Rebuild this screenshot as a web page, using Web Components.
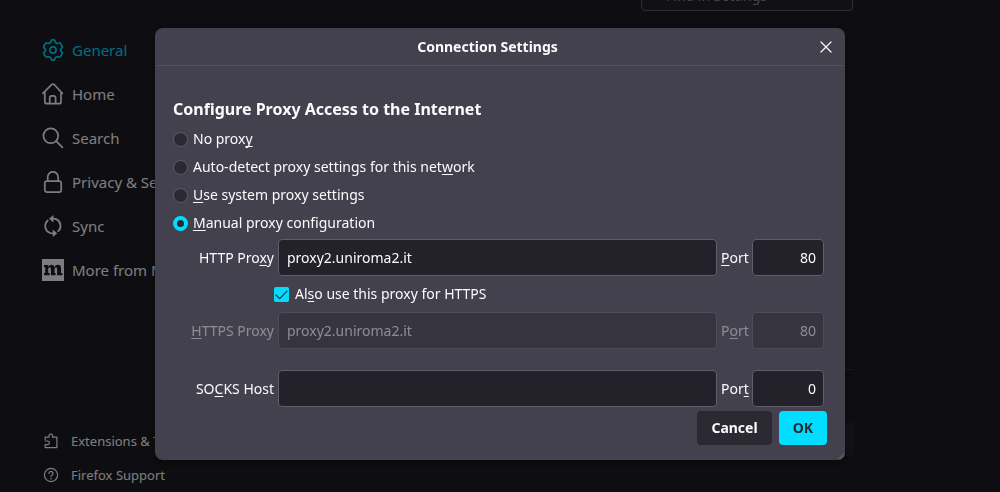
<!DOCTYPE html>
<html lang="en">
<head>
<meta charset="utf-8">
<meta name="viewport" content="width=device-width, initial-scale=1">
<title>Settings</title>
<style>
  :root {
    --bg: #1c1b22;
    --text: #fbfbfe;
    --accent: #00ddff;
    --dialog-bg: #42414d;
    --field-bg: #23222b;
    --button-bg: #2b2a33;
    --border: #5f5e69;
  }
  body {
    margin: 0;
    height: 100vh;
    overflow: hidden;
    background: var(--bg);
    color: var(--text);
    font: 14px/20px "Noto Sans", sans-serif;
  }
</style>
</head>
<body>
<settings-page>
  <nav-item slot="nav" icon="gear" href="#general" selected>General</nav-item>
  <nav-item slot="nav" icon="home" href="#home">Home</nav-item>
  <nav-item slot="nav" icon="search" href="#search">Search</nav-item>
  <nav-item slot="nav" icon="lock" href="#privacy">Privacy &amp; Se</nav-item>
  <nav-item slot="nav" icon="sync" href="#sync">Sync</nav-item>
  <nav-item slot="nav" icon="mozilla" href="#more">More from M</nav-item>
  <nav-item slot="footer" icon="extension" href="#addons" small>Extensions &amp; T</nav-item>
  <nav-item slot="footer" icon="help" href="#support" small>Firefox Support</nav-item>
</settings-page>

<settings-dialog>
  <span slot="title">Connection Settings</span>
  <proxy-form></proxy-form>
  <dialog-button slot="actions">Cancel</dialog-button>
  <dialog-button slot="actions" primary>OK</dialog-button>
</settings-dialog>

<script>
const icons = {
  gear: `<path d="M8.7 3.4 9.3 1.5Q9.6 .8 10.4 .8H11.6Q12.4 .8 12.7 1.5L13.3 3.4Q14.3 3.8 15.1 4.4L17.3 4Q18.1 3.8 18.6 4.6L20.2 7.3Q20.6 8.1 20 8.7L18.5 10.3Q18.6 11 18.5 11.7L20 13.3Q20.6 13.9 20.2 14.7L18.6 17.4Q18.1 18.2 17.3 18L15.1 17.6Q14.3 18.2 13.3 18.6L12.7 20.5Q12.4 21.2 11.6 21.2H10.4Q9.6 21.2 9.3 20.5L8.7 18.6Q7.7 18.2 6.9 17.6L4.7 18Q3.9 18.2 3.4 17.4L1.8 14.7Q1.4 13.9 2 13.3L3.5 11.7Q3.4 11 3.5 10.3L2 8.7Q1.4 8.1 1.8 7.3L3.4 4.6Q3.9 3.8 4.7 4L6.9 4.4Q7.7 3.8 8.7 3.4Z"/><circle cx="11" cy="11" r="3.1"/>`,
  home: `<path d="M.9 10.4 9.6 1.7Q11 .5 12.4 1.7L20.3 10.4M2.8 8.8V18.7Q2.8 20.7 4.8 20.7H17Q19 20.7 19 18.7V8.8M7.7 20.5V14.9Q7.7 12.9 9.7 12.9H11.6Q13.6 12.9 13.6 14.9V20.5"/>`,
  search: `<circle cx="8.8" cy="8.8" r="7.4"/><path d="m14.2 14.2 6.2 6.2"/>`,
  lock: `<rect x="2.8" y="10.1" width="16.4" height="11" rx="2"/><path d="M5.7 10V6a5.2 5.2 0 0 1 10.4 0V10"/>`,
  sync: `<path d="M7.5 17.8A7.4 7.4 0 0 1 5.8 5.5M10.5 3.6H11A7.4 7.4 0 0 1 16.2 16.2M14.5 4.2A7.4 7.4 0 0 1 16.2 16.2M7.5 17.8A7.4 7.4 0 0 0 11.5 18.4"/><path class="fill" d="M11.4 0V7.4L7 3.7ZM10.8 14.6V22L15.2 18.3Z"/>`,
  mozilla: `<path class="fill" d="M0 0H22V22H0Z"/><path class="cut" d="M2 6H6.4V8Q7.4 5.8 9.6 5.8T12.4 8Q13.6 5.8 15.9 5.8 19 5.8 19 9.2V14H20.4V16.2H15.1V10Q15.1 8.2 14 8.2 12.6 8.2 12.6 10.4V14H13.6V16.2H8.9V10Q8.9 8.2 7.8 8.2 6.2 8.2 6.2 10.4V14H7.6V16.2H2V14H3.2V8.2H2Z"/>`,
  extension: `<path d="M2.2 6.6V4.2H6V2.9A1.8 1.8 0 0 1 9.6 2.9V4.2H13.9V14.6H2.2V11.6H4.6A1.8 1.8 0 0 0 4.6 8H2.2"/>`,
  help: `<circle cx="8" cy="8" r="6.6"/><path d="M6 6.5A2 2 0 1 1 9.3 8Q8 8.8 8 9.6"/><circle class="fill" cx="8" cy="11.7" r=".8"/>`,
};

function setUp(element, html) {
  const template = document.createElement("template");
  template.innerHTML = html;
  element.attachShadow({ mode: "open" });
  element.shadowRoot.appendChild(template.content.cloneNode(true));
}

class NavItem extends HTMLElement {
  constructor() {
    super();
    const size = this.hasAttribute("small") ? 16 : 22;
    setUp(this, `
      <style>
        :host { display: block; white-space: nowrap; }
        a {
          display: flex;
          align-items: center;
          gap: 8px;
          height: 44px;
          color: var(--text);
          font-size: 15px;
          text-decoration: none;
        }
        :host([selected]) a { color: var(--accent); }
        :host([small]) a { height: 34px; gap: 12px; padding-left: 1px; font-size: 13px; }
        svg {
          flex: none;
          fill: none;
          stroke: currentColor;
          stroke-width: 1.7;
          stroke-linecap: round;
          stroke-linejoin: round;
        }
        :host([small]) svg { stroke-width: 1.2; }
        .fill { fill: currentColor; stroke: none; }
        .cut { fill: var(--bg); stroke: none; }
      </style>
      <a href="${this.getAttribute("href")}">
        <svg width="${size}" height="${size}" viewBox="0 0 ${size} ${size}" aria-hidden="true">${icons[this.getAttribute("icon")]}</svg>
        <slot></slot>
      </a>
    `);
  }
}

class SettingsPage extends HTMLElement {
  constructor() {
    super();
    setUp(this, `
      <style>
        :host { display: flex; height: 100%; }
        nav {
          display: flex;
          flex-direction: column;
          justify-content: space-between;
          box-sizing: border-box;
          width: 240px;
          padding: 28px 0 0 42px;
        }
        main {
          display: flex;
          flex: 1;
          flex-direction: column;
          align-items: flex-end;
          padding-right: 147px;
        }
        /* scrolled partly out of view */
        input {
          box-sizing: border-box;
          width: 212px;
          height: 32px;
          margin-top: -21px;
          padding: 0 24px;
          border: 1px solid #5a5962;
          border-radius: 4px;
          background: #23222b;
          color: var(--text);
          font: inherit;
        }
        input::placeholder { color: #8c8b94; opacity: 1; }
        hr {
          width: 100%;
          margin: 358px 0 52px;
          border: 0;
          border-top: 1px solid #34333b;
        }
        button {
          width: 120px;
          height: 34px;
          border: 0;
          border-radius: 4px;
          background: #25242c;
        }
      </style>
      <nav aria-label="Settings">
        <div><slot name="nav"></slot></div>
        <div><slot name="footer"></slot></div>
      </nav>
      <main>
        <input type="search" placeholder="Find in Settings" aria-label="Find in Settings">
        <hr>
        <button type="button" aria-label="Network settings"></button>
      </main>
    `);
  }
}

class SettingsDialog extends HTMLElement {
  constructor() {
    super();
    setUp(this, `
      <style>
        :host {
          position: fixed;
          inset: 0;
          display: flex;
          align-items: flex-start;
          justify-content: center;
          padding: 28px 16px;
          background: rgba(0, 0, 0, 0.5);
        }
        section {
          position: relative;
          box-sizing: border-box;
          width: 100%;
          max-width: 690px;
          border-radius: 8px;
          background: var(--dialog-bg);
          box-shadow: 0 2px 6px rgba(0, 0, 0, 0.4);
        }
        header {
          display: grid;
          grid-template-columns: 1fr 24px;
          align-items: center;
          height: 37px;
          padding: 0 7px 0 6px;
          border-bottom: 1px solid #52515e;
        }
        h1 {
          margin: 0;
          font-size: 14px;
          text-align: center;
        }
        header button {
          display: grid;
          place-items: center;
          height: 24px;
          padding: 0;
          border: 0;
          background: none;
          color: var(--text);
        }
        .body { padding: 31px 18px 0; }
        footer {
          display: flex;
          justify-content: flex-end;
          gap: 7px;
          padding: 4px 18px 15px;
        }
        .grip { position: absolute; right: 0; bottom: 0; }
      </style>
      <section role="dialog" aria-labelledby="title">
        <header>
          <h1 id="title"><slot name="title"></slot></h1>
          <button type="button" aria-label="Close">
            <svg width="12" height="12" viewBox="0 0 12 12" fill="none" stroke="currentColor" stroke-width="1.2" stroke-linecap="round"><path d="m1 1 10 10M11 1 1 11"/></svg>
          </button>
        </header>
        <div class="body"><slot></slot></div>
        <footer><slot name="actions"></slot></footer>
        <svg class="grip" width="8" height="8" viewBox="0 0 8 8" fill="none" stroke="#85848d" stroke-width=".7" aria-hidden="true"><path d="M1 7.5 7.5 1M3.5 7.5 7.5 3.5"/></svg>
      </section>
    `);
  }
}

class DialogButton extends HTMLElement {
  constructor() {
    super();
    setUp(this, `
      <style>
        :host { display: block; }
        button {
          height: 34px;
          padding: 0 14px;
          border: 0;
          border-radius: 4px;
          background: var(--button-bg);
          color: var(--text);
          font: inherit;
          font-weight: 700;
        }
        :host([primary]) button { background: var(--accent); color: #2b2a33; }
      </style>
      <button type="button"><slot></slot></button>
    `);
  }
}

class ProxyHost extends HTMLElement {
  constructor() {
    super();
    const disabled = this.hasAttribute("disabled") ? "disabled" : "";
    setUp(this, `
      <style>
        :host {
          display: grid;
          grid-template-columns: 81px 1fr 27px 72px;
          align-items: center;
          gap: 4px;
          white-space: nowrap;
        }
        :host([disabled]) { opacity: 0.4; }
        label[for="host"] { justify-self: end; }
        input {
          box-sizing: border-box;
          width: 100%;
          height: 37px;
          padding: 0 8px;
          border: 1px solid var(--border);
          border-radius: 4px;
          background: var(--field-bg);
          color: var(--text);
          font: inherit;
        }
        #port { padding: 0 7px; text-align: right; }
      </style>
      <label for="host"><slot></slot></label>
      <input id="host" type="text" value="${this.getAttribute("host")}" ${disabled}>
      <label for="port"><slot name="port"></slot></label>
      <input id="port" type="text" inputmode="numeric" value="${this.getAttribute("port")}" ${disabled}>
    `);
  }
}

class ProxyForm extends HTMLElement {
  constructor() {
    super();
    setUp(this, `
      <style>
        :host { display: block; }
        fieldset { min-width: 0; margin: 0; padding: 0; border: 0; }
        legend { padding: 0; margin-bottom: 8px; font-size: 16px; line-height: 24px; font-weight: 700; }
        u {
          text-decoration-thickness: 1px;
          text-underline-offset: 2px;
          text-decoration-skip-ink: none;
        }
        .choices { display: grid; gap: 8px; }
        .choice { display: flex; align-items: center; gap: 5px; }
        input { flex: none; appearance: none; box-sizing: border-box; width: 15px; height: 15px; margin: 0; }
        input[type="radio"] { border: 1px solid var(--border); border-radius: 50%; background: var(--button-bg); }
        input[type="radio"]:checked { border: 4px solid var(--accent); }
        .hosts { margin-top: 6px; padding: 0 3px 0 20px; }
        .share { display: flex; align-items: center; gap: 6px; height: 36px; padding-left: 81px; }
        .tick { display: grid; }
        .tick > * { grid-area: 1 / 1; }
        .tick input { border-radius: 2px; background: var(--accent); }
        .tick svg { display: none; pointer-events: none; }
        .tick input:checked + svg { display: block; }
        .socks { margin-top: 21px; }
      </style>
      <fieldset>
        <legend>Configure Proxy Access to the Internet</legend>
        <div class="choices">
          <div class="choice"><input type="radio" name="mode" id="none"><label for="none">No prox<u>y</u></label></div>
          <div class="choice"><input type="radio" name="mode" id="auto"><label for="auto">Auto-detect proxy settings for this net<u>w</u>ork</label></div>
          <div class="choice"><input type="radio" name="mode" id="system"><label for="system"><u>U</u>se system proxy settings</label></div>
          <div class="choice"><input type="radio" name="mode" id="manual" checked><label for="manual"><u>M</u>anual proxy configuration</label></div>
        </div>
      </fieldset>
      <div class="hosts">
        <proxy-host host="proxy2.uniroma2.it" port="80">HTTP Pro<u>x</u>y<span slot="port"><u>P</u>ort</span></proxy-host>
        <div class="share">
          <span class="tick">
            <input type="checkbox" id="share" checked>
            <svg width="15" height="15" viewBox="0 0 15 15" fill="none" stroke="#2b2a33" stroke-width="1.2" stroke-linecap="round" stroke-linejoin="round"><path d="m2 8 3.7 3.6L13 4.2"/></svg>
          </span>
          <label for="share">Al<u>s</u>o use this proxy for HTTPS</label>
        </div>
        <proxy-host host="proxy2.uniroma2.it" port="80" disabled><u>H</u>TTPS Proxy<span slot="port">P<u>o</u>rt</span></proxy-host>
        <proxy-host class="socks" host="" port="0">SO<u>C</u>KS Host<span slot="port">Por<u>t</u></span></proxy-host>
      </div>
    `);
  }
}

customElements.define("nav-item", NavItem);
customElements.define("settings-page", SettingsPage);
customElements.define("settings-dialog", SettingsDialog);
customElements.define("dialog-button", DialogButton);
customElements.define("proxy-host", ProxyHost);
customElements.define("proxy-form", ProxyForm);
</script>
</body>
</html>
